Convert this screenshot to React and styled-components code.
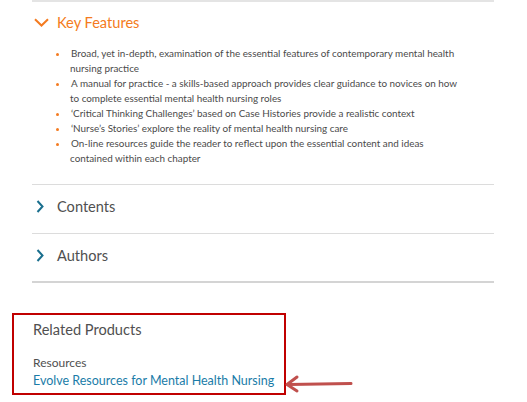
import React from "react";
import styled, { createGlobalStyle } from "styled-components";

const Global = createGlobalStyle`
  html, body { margin: 0; padding: 0; background: #fff; }
  body { font-family: Lato, "Noto Sans", sans-serif; color: #505050; }
`;

const Page = styled.div`
  width: 527px;
  height: 402px;
  overflow: hidden;
  position: relative;
`;

const Accordion = styled.div`
  margin-left: 32px;
  width: 462px;
  border-top: 2px solid #e4e4e4;
`;

const Section = styled.section`
  border-bottom: ${(p) => (p.$last ? "2px solid #d4d4d4" : "1px solid #dcdcdc")};
`;

const Header = styled.div`
  display: flex;
  align-items: center;
  box-sizing: border-box;
  height: ${(p) => p.$h}px;
  padding: 0 0 ${(p) => p.$pb || 0}px 2px;
  gap: 8px;
  font-size: 14.6px;
  color: ${(p) => (p.$open ? "#f47b20" : "#505050")};
`;

const IconBox = styled.span`
  width: 15px;
  display: flex;
  justify-content: center;
`;

const List = styled.ul`
  margin: 0;
  padding: 4px 29px 18px 38px;
  list-style: none;
  font-size: 9.9px;
  line-height: 15px;
  color: #4a4a4a;
`;

const Item = styled.li`
  position: relative;
  text-indent: 1px;
  &::before {
    content: "";
    position: absolute;
    left: -14px;
    top: 7px;
    width: 3px;
    height: 3px;
    border-radius: 50%;
    background: #f47b20;
  }
`;

const Related = styled.div`
  margin: 30px 0 0 12px;
  width: 251px;
  height: 78px;
  border: 2px solid #c00000;
  padding: 0 0 0 19px;
  box-sizing: content-box;
  position: relative;
`;

const RelatedTitle = styled.div`
  font-size: 14.6px;
  margin-top: 5px;
  line-height: 20px;
  color: #505050;
`;

const SubLabel = styled.div`
  margin-top: 14px;
  font-size: 12px;
  line-height: 17px;
  color: #505050;
`;

const Link = styled.a`
  display: block;
  font-size: 12.5px;
  line-height: 19px;
  color: #1a7ca8;
  text-decoration: none;
`;

const Arrow = styled.svg`
  position: absolute;
  left: 269px;
  top: 59px;
`;

const ChevronDown = () => (
  <svg width="15" height="9" viewBox="0 0 15 9">
    <path d="M1 1.2 L7.5 7.5 L14 1.2" fill="none" stroke="#f47b20" strokeWidth="2" />
  </svg>
);

const ChevronRight = () => (
  <svg width="15" height="13" viewBox="0 0 15 13">
    <path d="M3.5 1 L8.5 6.5 L3.5 12" fill="none" stroke="#1a6f8e" strokeWidth="2" />
  </svg>
);

const features = [
  "Broad, yet in-depth, examination of the essential features of contemporary mental health nursing practice",
  "A manual for practice - a skills-based approach provides clear guidance to novices on how to complete essential mental health nursing roles",
  "‘Critical Thinking Challenges’ based on Case Histories provide a realistic context",
  "‘Nurse’s Stories’ explore the reality of mental health nursing care",
  "On-line resources guide the reader to reflect upon the essential content and ideas contained within each chapter",
];

export default function App() {
  return (
    <Page>
      <Global />
      <Accordion>
        <Section>
          <Header $open $h={40}>
            <IconBox><ChevronDown /></IconBox>
            Key Features
          </Header>
          <List>
            {features.map((f) => (
              <Item key={f}>{f}</Item>
            ))}
          </List>
        </Section>
        <Section>
          <Header $h={48} $pb={5}>
            <IconBox><ChevronRight /></IconBox>
            Contents
          </Header>
        </Section>
        <Section $last>
          <Header $h={47} $pb={5}>
            <IconBox><ChevronRight /></IconBox>
            Authors
          </Header>
        </Section>
      </Accordion>
      <Related>
        <RelatedTitle>Related Products</RelatedTitle>
        <SubLabel>Resources</SubLabel>
        <Link href="#">Evolve Resources for Mental Health Nursing</Link>
        <Arrow width="72" height="20" viewBox="0 0 72 20">
          <path d="M68 9.5 L6 10.5" stroke="#c0504d" strokeWidth="3" strokeLinecap="round" fill="none" />
          <path d="M14 3 L4 10.5 L14 17" stroke="#c0504d" strokeWidth="3" strokeLinecap="round" strokeLinejoin="round" fill="none" />
        </Arrow>
      </Related>
    </Page>
  );
}
